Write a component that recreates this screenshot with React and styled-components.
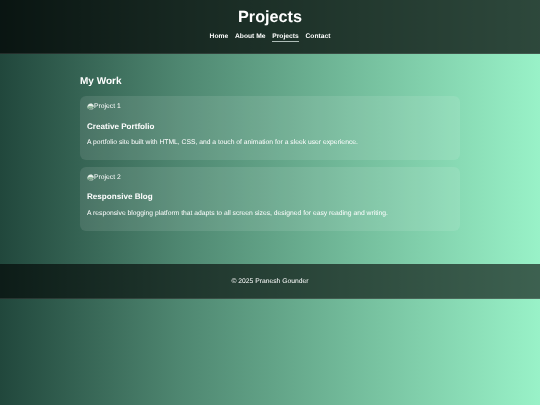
import React from "react";
import styled, { createGlobalStyle } from "styled-components";

const GlobalStyle = createGlobalStyle`
  html, body {
    margin: 0;
    padding: 0;
  }
  body {
    font-family: "Liberation Sans", Arial, sans-serif;
    color: #fff;
    text-rendering: geometricPrecision;
    background: linear-gradient(to right, #21473c, #4e8670 33%, #74bd9c 66%, #99f2c8);
    min-height: 405px;
  }
  #root {
    filter: blur(0.3px);
  }
`;

const Header = styled.header`
  background: rgba(0, 0, 0, 0.7);
  border-bottom: 1px solid rgba(255, 255, 255, 0.1);
  height: 54px;
  padding-top: 8px;
  box-sizing: border-box;
  text-align: center;
`;

const Title = styled.h1`
  margin: 0;
  font-size: 16.2px;
  line-height: 19px;
  font-weight: 700;
`;

const Nav = styled.nav`
  display: flex;
  justify-content: center;
  gap: 6.8px;
  margin-top: 5.5px;
`;

const NavLink = styled.a`
  font-size: 6.7px;
  line-height: 8px;
  font-weight: 700;
  border-bottom: 1px solid ${(p) => (p.$active ? "#aebdb8" : "transparent")};
`;

const Main = styled.main`
  width: 380px;
  margin: 22px auto 0;
`;

const Heading = styled.h2`
  margin: 0 0 8px;
  font-size: 10px;
  line-height: 12px;
  font-weight: 700;
`;

const Card = styled.article`
  background: rgba(255, 255, 255, 0.1);
  border-radius: 6px;
  padding: 6px 7px 0;
  margin-bottom: 6.5px;
  height: 64px;
  box-sizing: border-box;
`;

const Thumb = styled.div`
  display: flex;
  align-items: center;
  font-size: 6.75px;
  line-height: 9px;
`;

const BrokenIcon = styled.svg`
  width: 7px;
  height: 7px;
  flex: none;
`;

const CardTitle = styled.h3`
  margin: 10.5px 0 0;
  font-size: 8.1px;
  line-height: 10px;
  font-weight: 700;
`;

const CardText = styled.p`
  margin: 6.5px 0 0;
  font-size: 6.75px;
  line-height: 9px;
`;

const Footer = styled.footer`
  margin-top: 33.5px;
  height: 35px;
  padding-top: 1px;
  box-sizing: border-box;
  background: rgba(0, 0, 0, 0.6);
  border-bottom: 1px solid rgba(255, 255, 255, 0.1);
  display: flex;
  align-items: center;
  justify-content: center;
  font-size: 6.75px;
`;

const projects = [
  {
    label: "Project 1",
    title: "Creative Portfolio",
    text: "A portfolio site built with HTML, CSS, and a touch of animation for a sleek user experience.",
  },
  {
    label: "Project 2",
    title: "Responsive Blog",
    text: "A responsive blogging platform that adapts to all screen sizes, designed for easy reading and writing.",
  },
];

function Broken() {
  return (
    <BrokenIcon viewBox="0 0 16 16">
      <path d="M1 7c1-3 4-6 7-6h3l4 4v4L1 11z" fill="#e6efe9" />
      <path d="M1 10c2-3 6-4 9-3l5 2-3 3-4 1-3-1-3 2z" fill="#8fb59a" />
      <path d="M4 15l3-2 2 1 3-2 3 0v1l-3 2z" fill="#c4d2c8" />
    </BrokenIcon>
  );
}

export default function App() {
  return (
    <>
      <GlobalStyle />
      <Header>
        <Title>Projects</Title>
        <Nav>
          <NavLink>Home</NavLink>
          <NavLink>About Me</NavLink>
          <NavLink $active>Projects</NavLink>
          <NavLink>Contact</NavLink>
        </Nav>
      </Header>
      <Main>
        <Heading>My Work</Heading>
        {projects.map((p) => (
          <Card key={p.label}>
            <Thumb>
              <Broken />
              {p.label}
            </Thumb>
            <CardTitle>{p.title}</CardTitle>
            <CardText>{p.text}</CardText>
          </Card>
        ))}
      </Main>
      <Footer>© 2025 Pranesh Gounder</Footer>
    </>
  );
}
